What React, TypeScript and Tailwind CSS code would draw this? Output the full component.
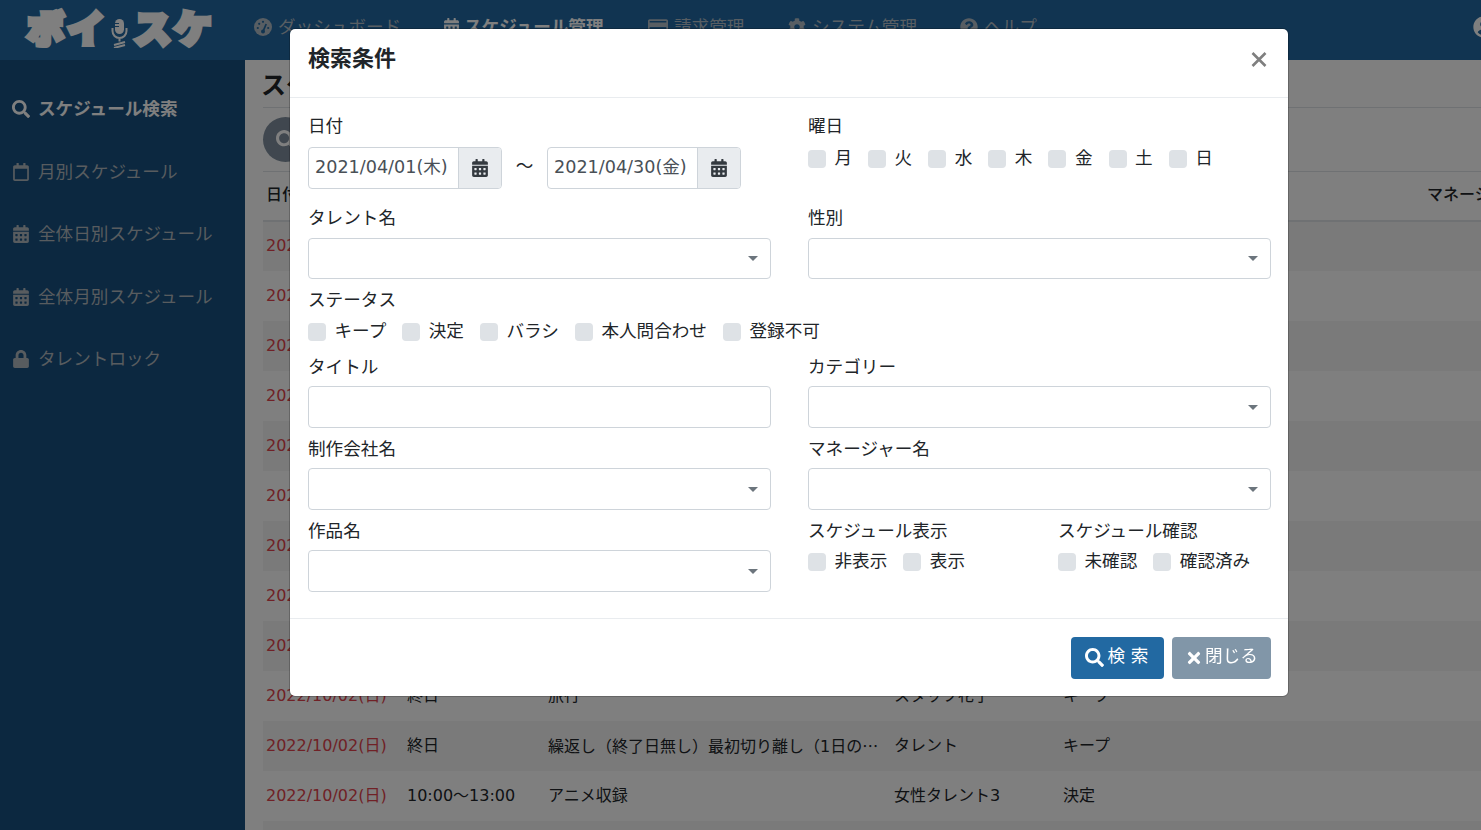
import { ReactNode } from "react";
import {
  FaSearch,
  FaRegCalendar,
  FaCalendarAlt,
  FaLock,
  FaRegCreditCard,
  FaCog,
  FaQuestionCircle,
  FaUserCircle,
  FaTimes,
} from "react-icons/fa";

const font = "font-['DejaVu_Sans','Noto_Sans_CJK_JP',sans-serif]";

const rows: ReactNode[][] = [
  ["2022/10/02(日)", "終日", "旅行", "タレント", "キープ"],
  ["2022/10/02(日)", "終日", "旅行", "タレント", "キープ"],
  ["2022/10/02(日)", "終日", "旅行", "タレント", "決定"],
  ["2022/10/02(日)", "終日", "旅行", "タレント", "キープ"],
  ["2022/10/02(日)", "終日", "旅行", "タレント", "決定"],
  ["2022/10/02(日)", "終日", "旅行", "タレント", "キープ"],
  ["2022/10/02(日)", "終日", "旅行", "タレント", "決定"],
  ["2022/10/02(日)", "終日", "旅行", "タレント", "キープ"],
  ["2022/10/02(日)", "終日", "旅行", "タレント", "キープ"],
  ["2022/10/02(日)", "終日", "旅行", "スタッフ花子", "キープ"],
  [
    "2022/10/02(日)",
    "終日",
    <>
      繰返し（終了日無し）最初切り離し（1日の<span className="font-['Noto_Sans_CJK_JP']">…</span>
    </>,
    "タレント",
    "キープ",
  ],
  ["2022/10/02(日)", "10:00〜13:00", "アニメ収録", "女性タレント3", "決定"],
  ["2022/10/02(日)", "終日", "旅行", "タレント", "キープ"],
];

function Logo() {
  return (
    <div className="mt-[7px] ml-[27px] flex w-[187px] shrink-0 items-center text-[37px] leading-none font-black tracking-[3.5px] whitespace-nowrap text-white [-webkit-text-stroke:5px_white] [stroke-linejoin:round]">
      <span className="shrink-0">ボイ</span>
      <svg width="17" height="29" viewBox="0 0 17 29" className="mt-[6px] mr-[6px] ml-[3px] shrink-0">
        <rect x="4" y="0" width="9" height="15" rx="4.5" fill="white" />
        <path d="M4 4.5h4M4 7.5h4" stroke="#2269a2" strokeWidth="1" />
        <path d="M1.5 9v3a7 7 0 0 0 14 0v-3M8.5 19v3.5M3 26l11-3M3 29l11-3" fill="none" stroke="white" strokeWidth="2" />
      </svg>
      <span className="shrink-0">スケ</span>
    </div>
  );
}

function GaugeIcon() {
  return (
    <svg width="18" height="18" viewBox="0 0 18 18" className="shrink-0">
      <circle cx="9" cy="9" r="9" fill="currentColor" />
      <g fill="#2269a2">
        <circle cx="3.8" cy="10" r="1.1" />
        <circle cx="5.2" cy="5.8" r="1.1" />
        <circle cx="9" cy="3.8" r="1.1" />
        <circle cx="14.2" cy="10" r="1.1" />
        <circle cx="9" cy="13.5" r="2" />
      </g>
      <path d="M9 13.5l3.2-7.5" stroke="#2269a2" strokeWidth="1.8" />
    </svg>
  );
}

function NavItem({ icon, label, bold, className }: { icon: ReactNode; label: string; bold?: boolean; className: string }) {
  return (
    <div className={`flex shrink-0 items-center gap-[6px] ${className} ${bold ? "font-bold text-white" : "text-[#b0bcc6]"}`}>
      {icon}
      <span className={bold ? "-ml-[2px]" : ""}>{label}</span>
    </div>
  );
}

function SideItem({ icon, label, active }: { icon: ReactNode; label: string; active?: boolean }) {
  return (
    <div className={`flex h-[62.5px] items-center gap-[8px] pl-[12px] ${active ? "font-bold text-white" : "text-[#b0b8be]"}`}>
      {icon}
      <span>{label}</span>
    </div>
  );
}

function Background() {
  return (
    <div className="flex h-[830px] flex-col overflow-hidden bg-white">
      <header className="flex h-[60px] shrink-0 items-center bg-[#2269a2] pb-[6px] text-[17.6px]">
        <Logo />
        <NavItem className="ml-[40px] w-[189px]" icon={<GaugeIcon />} label="ダッシュボード" />
        <NavItem className="w-[205px]" bold icon={<FaCalendarAlt size={17} />} label="スケジュール管理" />
        <NavItem className="w-[140px]" icon={<FaRegCreditCard size={20} />} label="請求管理" />
        <NavItem className="w-[172px]" icon={<FaCog size={18} />} label="システム管理" />
        <NavItem className="w-[513px]" icon={<FaQuestionCircle size={18} />} label="ヘルプ" />
        <FaUserCircle size={22} className="shrink-0 text-white" />
      </header>
      <div className="flex min-h-0 flex-1">
        <aside className="w-[245px] shrink-0 bg-[#185080] pt-[18px] text-[17.6px]">
          <SideItem active icon={<FaSearch size={18} />} label="スケジュール検索" />
          <SideItem icon={<FaRegCalendar size={18} />} label="月別スケジュール" />
          <SideItem icon={<FaCalendarAlt size={18} />} label="全体日別スケジュール" />
          <SideItem icon={<FaCalendarAlt size={18} />} label="全体月別スケジュール" />
          <SideItem icon={<FaLock size={18} />} label="タレントロック" />
        </aside>
        <main className="min-w-0 flex-1 overflow-hidden pl-[18px] text-[16px] text-[#212529]">
          <div className="flex h-[48px] items-center border-b border-[#dee2e6] pt-[4px] text-[25px] font-bold">
            <span className="-ml-[2px]">スケジュール検索</span>
          </div>
          <div className="flex h-[64px] items-start border-b border-[#dee2e6] pt-[9px]">
            <div className="flex h-[45px] w-[45px] items-center justify-center rounded-full bg-[#808f9e] text-white">
              <FaSearch size={20} />
            </div>
          </div>
          <div className="flex h-[50px] items-center border-b-[2px] border-[#dee2e6] pb-[2px] pl-[3px] font-medium">
            <span className="w-[141px] shrink-0">日付</span>
            <span className="w-[141px] shrink-0">時間</span>
            <span className="w-[346px] shrink-0">タイトル</span>
            <span className="w-[169px] shrink-0">タレント名</span>
            <span className="w-[364px] shrink-0">ステータス</span>
            <span className="whitespace-nowrap">マネージャー名</span>
          </div>
          <div>
            {rows.map((r, i) => (
              <div key={i} className={`flex h-[50px] items-center pb-[1px] pl-[3px] first:h-[49px] ${i % 2 === 0 ? "bg-[#f4f4f4]" : ""}`}>
                <span className="w-[141px] text-[#e0434c]">{r[0]}</span>
                <span className="w-[141px]">{r[1]}</span>
                <span className="w-[346px] pr-[20px] whitespace-nowrap">{r[2]}</span>
                <span className="w-[169px]">{r[3]}</span>
                <span className="w-[364px]">{r[4]}</span>
              </div>
            ))}
          </div>
        </main>
      </div>
    </div>
  );
}

function Label({ children, className = "h-[40px]" }: { children: ReactNode; className?: string }) {
  return <div className={`flex items-center pt-[3px] ${className}`}>{children}</div>;
}

function Select({ className = "h-[42px]" }: { className?: string }) {
  return (
    <div className={`flex items-center justify-end rounded-[4px] border border-[#ced4da] bg-white pr-[12px] ${className}`}>
      <span className="h-0 w-0 border-x-[5px] border-t-[5px] border-x-transparent border-t-[#6c757d]" />
    </div>
  );
}

function Check({ label, className = "mr-[16px]" }: { label: string; className?: string }) {
  return (
    <label className={`flex items-center gap-[8.5px] ${className}`}>
      <span className="h-[18px] w-[18px] rounded-[4px] bg-[#dee2e6]" />
      <span className="-mt-[2px]">{label}</span>
    </label>
  );
}

function DateInput({ value }: { value: string }) {
  return (
    <div className="flex h-[42px] w-[194px] rounded-[4px] border border-[#ced4da] text-[#495057]">
      <div className="flex w-[149px] items-center pb-[2px] pl-[6px] whitespace-nowrap">{value}</div>
      <div className="flex flex-1 items-center justify-center rounded-r-[3px] border-l border-[#ced4da] bg-[#e9ecef] text-[#343a40]">
        <FaCalendarAlt size={18} />
      </div>
    </div>
  );
}

function SearchModal() {
  return (
    <div className="fixed inset-0 bg-black/50">
      <div className="mt-[29px] ml-[290px] w-[998px] rounded-[5px] bg-white text-[17.6px] text-[#212529] outline outline-black/20">
        <div className="flex h-[69px] items-center justify-between border-b border-[#e9ecef] px-[18px]">
          <h5 className="mb-[10px] text-[22px] font-bold">検索条件</h5>
          <svg width="16" height="15" viewBox="0 0 16 15" className="mr-[3px] mb-[8px]">
            <path d="M1.5 1l13 13M14.5 1l-13 13" stroke="#7f7f7f" strokeWidth="2.6" />
          </svg>
        </div>
        <div className="px-[18px] pt-[7px] pb-[26px]">
          <div className="grid grid-cols-[463px_463px] gap-x-[37px]">
            <div>
              <Label className="mb-[2px] h-[40px]">日付</Label>
              <div className="flex items-center">
                <DateInput value="2021/04/01(木)" />
                <span className="w-[45px] pb-[4px] text-center">～</span>
                <DateInput value="2021/04/30(金)" />
              </div>
            </div>
            <div>
              <Label className="mb-[2px] h-[40px]">曜日</Label>
              <div className="flex h-[24px] items-center">
                {["月", "火", "水", "木", "金", "土", "日"].map((d) => (
                  <Check key={d} label={d} />
                ))}
              </div>
            </div>
          </div>
          <div className="mt-[7px] grid grid-cols-[463px_463px] gap-x-[37px]">
            <div>
              <Label className="h-[42px]">タレント名</Label>
              <Select className="h-[41px]" />
            </div>
            <div>
              <Label className="h-[42px]">性別</Label>
              <Select className="h-[41px]" />
            </div>
          </div>
          <Label>ステータス</Label>
          <div className="flex h-[27px] items-center">
            {["キープ", "決定", "バラシ", "本人問合わせ", "登録不可"].map((s) => (
              <Check key={s} label={s} />
            ))}
          </div>
          <div className="grid grid-cols-[463px_463px] gap-x-[37px]">
            <div>
              <Label>タイトル</Label>
              <div className="h-[42px] rounded-[4px] border border-[#ced4da]" />
            </div>
            <div>
              <Label>カテゴリー</Label>
              <Select />
            </div>
            <div>
              <Label>制作会社名</Label>
              <Select />
            </div>
            <div>
              <Label>マネージャー名</Label>
              <Select />
            </div>
            <div>
              <Label>作品名</Label>
              <Select />
            </div>
            <div className="grid grid-cols-[250px_213px]">
              <div>
                <Label>スケジュール表示</Label>
                <div className="flex h-[24px] items-center">
                  <Check label="非表示" />
                  <Check label="表示" />
                </div>
              </div>
              <div>
                <Label>スケジュール確認</Label>
                <div className="flex h-[24px] items-center">
                  <Check label="未確認" />
                  <Check label="確認済み" className="" />
                </div>
              </div>
            </div>
          </div>
        </div>
        <div className="flex justify-end gap-[8px] border-t border-[#e9ecef] px-[17px] pt-[18px] pb-[17px] text-white">
          <button className="flex h-[42px] w-[93px] items-center justify-center gap-[4px] rounded-[4px] bg-[#2269a2] pb-[3px]">
            <FaSearch size={19} className="mt-[2px] -ml-[2px]" />
            <span>検 索</span>
          </button>
          <button className="flex h-[42px] w-[99px] items-center justify-center gap-[4px] rounded-[4px] bg-[#8196a8] pb-[3px]">
            <FaTimes size={18} className="mt-[2px]" />
            <span className="-ml-[2px]">閉じる</span>
          </button>
        </div>
      </div>
    </div>
  );
}

export default function App() {
  return (
    <div className={font}>
      <Background />
      <SearchModal />
    </div>
  );
}
